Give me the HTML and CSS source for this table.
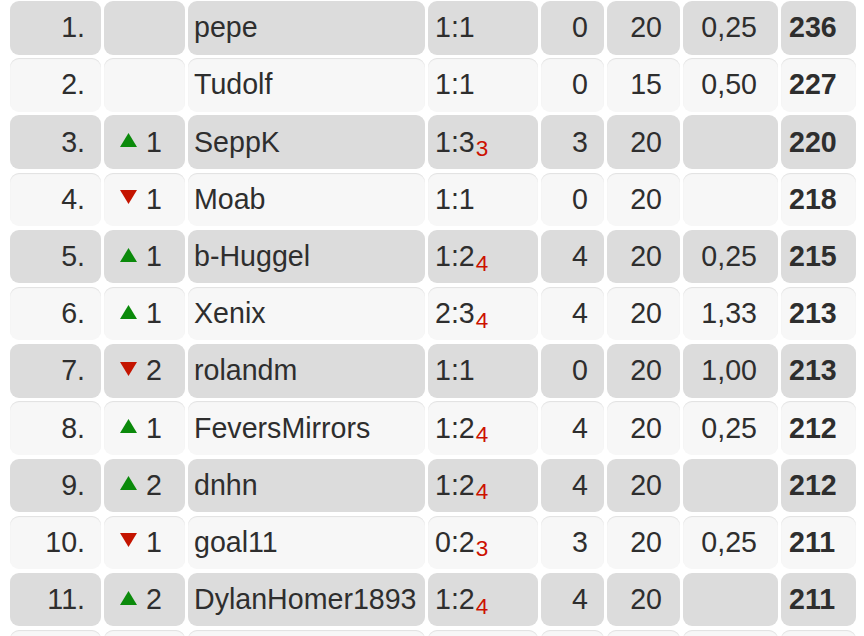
FILE: index.html
```html
<!DOCTYPE html>
<html>
<head>
<meta charset="utf-8">
<link rel="stylesheet" href="styles.css">
</head>
<body>
<div class="table">
  <div class="row dark"><div class="c rank">1.</div><div class="c chg"></div><div class="c name">pepe</div><div class="c score">1:1</div><div class="c n5">0</div><div class="c n6">20</div><div class="c n7">0,25</div><div class="c pts">236</div></div>
  <div class="row light"><div class="c rank">2.</div><div class="c chg"></div><div class="c name">Tudolf</div><div class="c score">1:1</div><div class="c n5">0</div><div class="c n6">15</div><div class="c n7">0,50</div><div class="c pts">227</div></div>
  <div class="row dark"><div class="c rank">3.</div><div class="c chg"><svg class="tri up" viewBox="0 0 17 14"><polygon points="8.5,0 17,14 0,14"/></svg>1</div><div class="c name">SeppK</div><div class="c score">1:3<span class="sub">3</span></div><div class="c n5">3</div><div class="c n6">20</div><div class="c n7"></div><div class="c pts">220</div></div>
  <div class="row light"><div class="c rank">4.</div><div class="c chg"><svg class="tri down" viewBox="0 0 17 14"><polygon points="0,0 17,0 8.5,14"/></svg>1</div><div class="c name">Moab</div><div class="c score">1:1</div><div class="c n5">0</div><div class="c n6">20</div><div class="c n7"></div><div class="c pts">218</div></div>
  <div class="row dark"><div class="c rank">5.</div><div class="c chg"><svg class="tri up" viewBox="0 0 17 14"><polygon points="8.5,0 17,14 0,14"/></svg>1</div><div class="c name">b-Huggel</div><div class="c score">1:2<span class="sub">4</span></div><div class="c n5">4</div><div class="c n6">20</div><div class="c n7">0,25</div><div class="c pts">215</div></div>
  <div class="row light"><div class="c rank">6.</div><div class="c chg"><svg class="tri up" viewBox="0 0 17 14"><polygon points="8.5,0 17,14 0,14"/></svg>1</div><div class="c name">Xenix</div><div class="c score">2:3<span class="sub">4</span></div><div class="c n5">4</div><div class="c n6">20</div><div class="c n7">1,33</div><div class="c pts">213</div></div>
  <div class="row dark"><div class="c rank">7.</div><div class="c chg"><svg class="tri down" viewBox="0 0 17 14"><polygon points="0,0 17,0 8.5,14"/></svg>2</div><div class="c name">rolandm</div><div class="c score">1:1</div><div class="c n5">0</div><div class="c n6">20</div><div class="c n7">1,00</div><div class="c pts">213</div></div>
  <div class="row light"><div class="c rank">8.</div><div class="c chg"><svg class="tri up" viewBox="0 0 17 14"><polygon points="8.5,0 17,14 0,14"/></svg>1</div><div class="c name">FeversMirrors</div><div class="c score">1:2<span class="sub">4</span></div><div class="c n5">4</div><div class="c n6">20</div><div class="c n7">0,25</div><div class="c pts">212</div></div>
  <div class="row dark"><div class="c rank">9.</div><div class="c chg"><svg class="tri up" viewBox="0 0 17 14"><polygon points="8.5,0 17,14 0,14"/></svg>2</div><div class="c name">dnhn</div><div class="c score">1:2<span class="sub">4</span></div><div class="c n5">4</div><div class="c n6">20</div><div class="c n7"></div><div class="c pts">212</div></div>
  <div class="row light"><div class="c rank">10.</div><div class="c chg"><svg class="tri down" viewBox="0 0 17 14"><polygon points="0,0 17,0 8.5,14"/></svg>1</div><div class="c name">goal11</div><div class="c score">0:2<span class="sub">3</span></div><div class="c n5">3</div><div class="c n6">20</div><div class="c n7">0,25</div><div class="c pts">211</div></div>
  <div class="row dark"><div class="c rank">11.</div><div class="c chg"><svg class="tri up" viewBox="0 0 17 14"><polygon points="8.5,0 17,14 0,14"/></svg>2</div><div class="c name">DylanHomer1893</div><div class="c score">1:2<span class="sub">4</span></div><div class="c n5">4</div><div class="c n6">20</div><div class="c n7"></div><div class="c pts">211</div></div>
  <div class="row light"><div class="c rank"></div><div class="c chg"></div><div class="c name"></div><div class="c score"></div><div class="c n5"></div><div class="c n6"></div><div class="c n7"></div><div class="c pts"></div></div>
</div>
</body>
</html>
```

FILE: styles.css
```css
html, body {
  margin: 0;
  padding: 0;
  background: #ffffff;
  overflow: hidden;
}
body {
  width: 864px;
  height: 636px;
  font-family: "Liberation Sans", Arial, Helvetica, sans-serif;
  font-size: 28.6px;
  color: #2e2e2e;
}
.table {
  display: grid;
  grid-template-columns: 91px 81px 237px 110px 63px 73px 95px 75px;
  grid-auto-rows: 53.5px;
  column-gap: 3px;
  row-gap: 3.7px;
  padding: 1px 0 0 10px;
}
.row {
  display: contents;
}
.c {
  border-radius: 9px;
  display: flex;
  align-items: center;
  white-space: nowrap;
  padding: 0 6px;
}
.dark .c {
  background: #dcdcdc;
}
.light .c {
  background: #f7f7f7;
  box-shadow: inset 0 1px 1px rgba(0, 0, 0, 0.09);
}
.rank {
  justify-content: flex-end;
  padding-right: 16px;
}
.chg {
  padding-left: 16px;
}
.tri {
  width: 17px;
  height: 14px;
  margin-right: 9px;
  position: relative;
  top: -2px;
}
.tri.up { fill: #0b8a0b; }
.tri.down { fill: #c41400; }
.score {
  padding-left: 7px;
}
.score .sub {
  font-size: 22.5px;
  color: #cc1100;
  position: relative;
  top: 7px;
  margin-left: 1px;
}
.n5, .n6, .n7 {
  justify-content: flex-end;
}
.n5 { padding-right: 16px; }
.n6 { padding-right: 18px; }
.n7 { padding-right: 21px; }
.pts {
  font-weight: bold;
  padding-left: 8px;
}
```
